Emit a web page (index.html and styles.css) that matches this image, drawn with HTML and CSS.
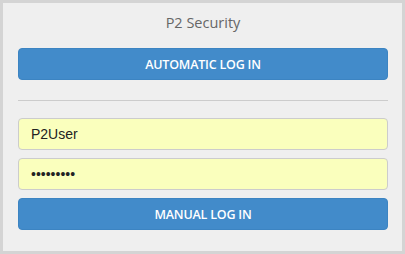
FILE: index.html
```html
<!DOCTYPE html>
<html>
<head>
<meta charset="utf-8">
<link rel="stylesheet" href="styles.css">
</head>
<body>
<div class="panel">
  <div class="title">P2 Security</div>
  <button class="btn" type="button">AUTOMATIC LOG IN</button>
  <hr class="divider">
  <div class="fields">
    <input class="field" type="text" value="P2User">
    <input class="field" type="password" value="123456789">
    <button class="btn" type="button">MANUAL LOG IN</button>
  </div>
</div>
</body>
</html>
```

FILE: styles.css
```css
html, body {
  margin: 0;
  padding: 0;
  background: #efefef;
}
.panel {
  box-sizing: border-box;
  width: 405px;
  height: 254px;
  border: 3px solid #d4d4d4;
  background: #efefef;
  padding: 0 14px 0 15px;
  display: flex;
  flex-direction: column;
}
.title {
  font-family: "Open Sans", sans-serif;
  font-size: 14.5px;
  color: #666;
  text-align: center;
  height: 45px;
  line-height: 40px;
}
.btn {
  box-sizing: border-box;
  height: 32px;
  width: 100%;
  border: 1px solid #3c84c2;
  border-radius: 4px;
  background: #428bca;
  color: #fff;
  font-family: "Open Sans", sans-serif;
  font-size: 12.5px;
  font-weight: 600;
  letter-spacing: -0.2px;
  padding: 0;
  margin: 0;
}
.divider {
  border: 0;
  border-top: 1px solid #cccccc;
  margin: 20px 0 17px;
  height: 0;
}
.fields {
  display: flex;
  flex-direction: column;
  gap: 8px;
}
.field {
  box-sizing: border-box;
  height: 32px;
  width: 100%;
  margin: 0;
  border: 1px solid #cccccc;
  border-radius: 4px;
  background: #faffbd;
  padding: 0 12px;
  font-family: "Liberation Sans", Arial, sans-serif;
  font-size: 14px;
  color: #222;
  outline: none;
}
```
